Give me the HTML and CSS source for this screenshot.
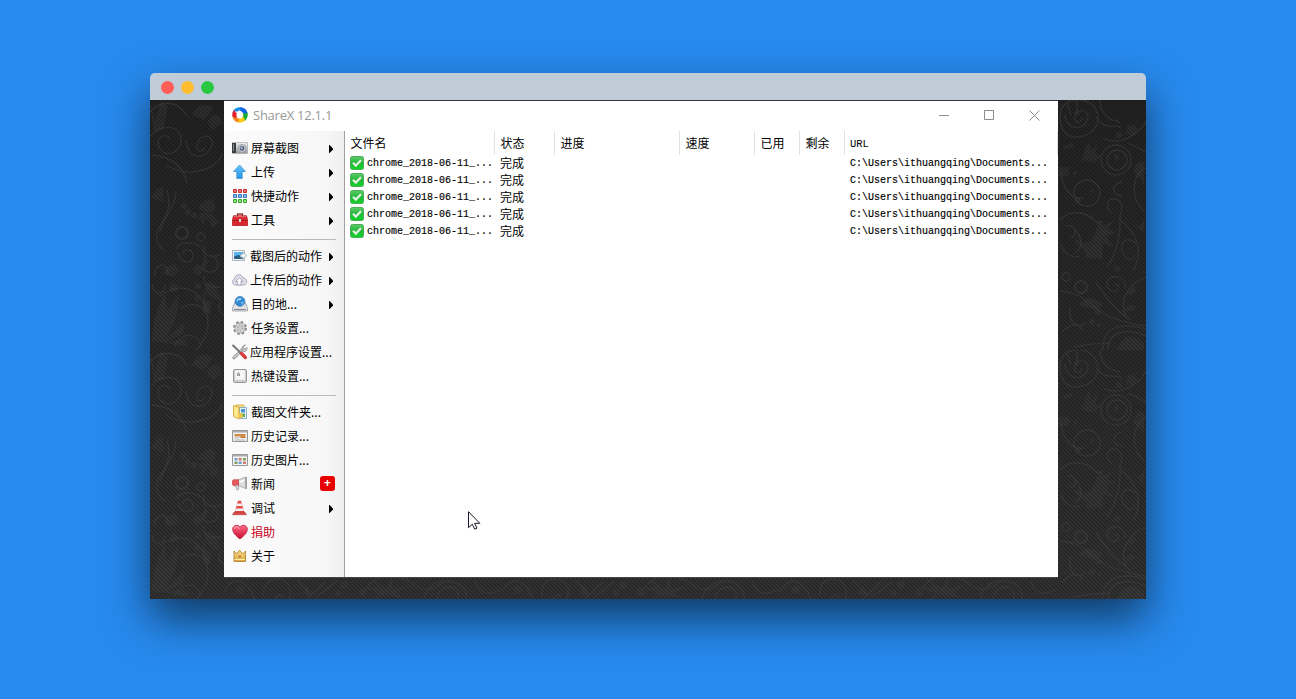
FILE: index.html
```html
<!DOCTYPE html>
<html lang="zh-CN">
<head>
<meta charset="utf-8">
<title>ShareX 12.1.1</title>
<link rel="stylesheet" href="styles.css">
</head>
<body>
<svg class="defs" width="0" height="0" aria-hidden="true">
  <defs>
    <linearGradient id="metal" x2="0" y2="1"><stop stop-color="#f2f2f4"/><stop offset="1" stop-color="#92959b"/></linearGradient>
    <linearGradient id="green" x2="0" y2="1"><stop stop-color="#5fca6c"/><stop offset=".5" stop-color="#1fb934"/><stop offset="1" stop-color="#12d428"/></linearGradient>
    <linearGradient id="blue" x2="0" y2="1"><stop stop-color="#6cc4ff"/><stop offset="1" stop-color="#1e95e6"/></linearGradient>
    <linearGradient id="gold" x2="0" y2="1"><stop stop-color="#ffe48a"/><stop offset="1" stop-color="#dca03a"/></linearGradient>
    <linearGradient id="rose" x2="0" y2="1"><stop stop-color="#ff6b86"/><stop offset="1" stop-color="#c8082e"/></linearGradient>
    <symbol id="arrow" viewBox="0 0 4 8"><path d="M0 0h.6L4 3.4v1.2L.6 8H0z" fill="#000"/></symbol>
    <symbol id="check" viewBox="0 0 14 14"><rect x=".5" y=".5" width="13" height="13" rx="2" fill="url(#green)" stroke="#4aac58"/><path d="M3 6.8l2.8 2.8L11 4.2" fill="none" stroke="#e6efe4" stroke-width="2.2"/></symbol>
  </defs>
</svg>
<main class="frame">
  <div class="mac-bar"><i class="dot red"></i><i class="dot yellow"></i><i class="dot green"></i></div>
  <div class="desktop">
    <svg class="wallpaper" width="996" height="499" aria-hidden="true">
      <defs>
        <pattern id="twill" width="4" height="4" patternUnits="userSpaceOnUse"><path d="M-1-1l6 6M3-1l2 2M-1 3l2 2" stroke="#000" stroke-opacity=".3" stroke-width="1"/></pattern>
        <linearGradient id="base" x2="0" y2="1"><stop stop-color="#222"/><stop offset="1" stop-color="#303030"/></linearGradient>
        <pattern id="floral-right" x="908" width="88" height="250" patternUnits="userSpaceOnUse">
          <g class="vine">
            <path d="M3 10C8-4 31-4 38 10S34 36 19 37 0 22 3 10M7 14C7 29 24 32 29 21S19 7 17 16s7 7 7 2M9 4c3 8 4 10 4 11M19 1v10M42 0C42 14 50 20 62 22M38 17C48 33 59 22 63 28M45 38C64 48 84 30 88 21M70 43l18 9"/>
            <circle cx="58" cy="60" r="15"/><circle cx="59" cy="60" r="10"/><circle cx="29" cy="93" r="13"/><path d="M3 73c2 18 12 27 23 25M64 82c-12 2-10 14 0 14M88 67C73 76 72 98 86 111"/>
            <path d="M2 120C15 107 30 114 34 119M5 117c11-8 26-3 31 3s7 0 8 2M54 114c-7-6-5-16 3-15s8 11 5 16c1 20-4 39-13 52M62 120c18 13 23 31 14 50M78 143c-11-8-17 1-13 10s13 7 11 2M8 126c11-3 12 12 4 11M15 127c9 9 11 21 2 26M3 144c2 9 11 15 19 12"/>
            <circle cx="8" cy="177" r="4"/><circle cx="23" cy="187" r="6" stroke-width="2"/><path d="M67 188c2-8-10-16-17-8-4 7 4 14 9 10s-1-7-3-5M88 177c-21 8-28 28-18 42M2 191c25 3 26 11 43 22 9 6 23 10 43 13M38 183c9 12 16 25 34 37M12 207c-2 17 9 24 15 15M16 247c31-6 22-2 35-4M45 250c-1-26 22-27 43-21M50 250c0-20 20-22 38-14M4 232c10-10 18-9 20-2"/>
          </g>
          <g class="leaf">
            <path d="M16 13l3-4 3 5-2 2zM24 60l4-13 3-6 2 9 7-5-3 9 6 2-7 7zM5 47l9-4 2 3-8 3zM0 67h11v9H0zM57 60c-2-5 1-8 3-5s0 7-3 6M70 24l4 2 3-3 1 5 3 2-4 2-1 4-4-2-5 1 2-4zM76 73c1-11 6-13 10-10v22c-3-10-5-6-10-12M43 120c-7 7-4 21-16 23-6 0-8-6-10-3 0 8 14 8 10 18 8-2 7 5 12-1l5 2 1-15 11 3-8-10 10-5-9-3 7-8-12 5zM76 124l5 3 6-8-2 14zM20 205c10-12 20-4 25-1l-7 6zM70 194c2-7 7-8 8-6s-4 8-7 7M67 210c3-7 9-6 10-3s-5 5-8 4M59 250c5-14 14-19 27-7v7z"/>
            <circle cx="34" cy="91" r="2"/><circle cx="20" cy="100" r="3"/><circle cx="17" cy="73" r="2"/><circle cx="40" cy="212" r="3"/><circle cx="61" cy="35" r="3"/><circle cx="59" cy="169" r="3"/><circle cx="34" cy="222" r="3"/><circle cx="41" cy="225" r="2"/>
          </g>
        </pattern>
        <pattern id="floral-left" width="74" height="250" patternUnits="userSpaceOnUse">
          <g class="vine">
            <path d="M0 12c13-14 30-10 37 4M1 36c9-12 29-12 30 3s-18 20-22 8 8-14 11-8M36 41c2 17 16 20 24 8s-8-18-12-7 5 11 7 5M2 55c24 2 32 15 35 28M16 65C40 80 70 68 72 53M17 90c5 18-1 26-7 36s-4 19 5 25M26 91c-1 19-10 19-16 41"/>
            <circle cx="32" cy="133" r="6" stroke-width="2"/><circle cx="51" cy="137" r="4"/><path d="M27 149c1-9 21-8 26 1s13 7 18 4M28 152c1 12 16 13 15 3-1-7-10-7-10-1M54 145c0 8 3 19 0 25M60 155c8 0 12 17 0 17s-8-13-2-10M15 185c0 13-16 8-12-1M5 176c-3-11 14-17 13-1M9 197c18-16 40-9 46 10s3 29-9 43M31 208c10-6 20-4 25 4M25 246c5-14 22-15 26 0M55 192c-2 5-3 14 5 20M72 201c-5 5-4 10 2 14M54 176c-1 11 6 12 17 11"/>
          </g>
          <g class="leaf">
            <path d="M0 2l5 20 6-21 7 6-5 23-9 2zM42 15c6-13 17-11 21-7l-9 12zM57 23c3-9 13-12 15 0l-9 7zM1 98c9-15 15-14 12 4zM48 109c6-12 16-13 17-4s-6 8-17 4M49 119c-1-10 13-7 16-2l-10 3M63 128c-9-11 0-17 6-6zM15 168l10-5 4 8-6 6-9-3zM55 188c0-8 8-9 13 3l4 10c-8-3-13-2-17-13M53 205l2-6 6 3-1 12-7-1zM2 241c0-19 8-38 13-48l2 18 12-16-3 23-10 20 19-16-2 11-17 9 18-3 4 7z"/>
            <circle cx="34" cy="106" r="3"/><circle cx="38" cy="112" r="3"/><circle cx="44" cy="115" r="3"/><circle cx="53" cy="122" r="2"/><circle cx="48" cy="170" r="5"/><circle cx="48" cy="186" r="3"/><circle cx="47" cy="198" r="3"/><circle cx="24" cy="188" r="4"/>
          </g>
        </pattern>
        <pattern id="floral-bottom" x="74" y="477" width="278" height="250" patternUnits="userSpaceOnUse">
          <g class="vine"><path d="M0 15c11-20 24-10 31 7M40 20c-4-24 29-23 26-3s-19 7-14 3 7-2 6 1M73 3l15 15M101 5L83 22M113 4c-12 9-15 13-22 16M142 12c13-20 37-13 49-4s21 3 30-4M200 22c7-29 46-19 42 0M213 22c2-17 25-15 21 0M250 4c8 18 17 12 28 8"/></g>
          <g class="leaf"><circle cx="16" cy="13" r="4"/><circle cx="121" cy="8" r="4"/><circle cx="114" cy="16" r="3"/><circle cx="139" cy="15" r="4"/><path d="M155 16l-15-5 14-1-9-9 17 10 6-12 1 13 17-4-14 8 10 5-22-3-11 5zM78 17l5-9 3 11z"/></g>
        </pattern>
      </defs>
      <rect width="996" height="499" fill="url(#base)"/>
      <rect width="74" height="499" fill="url(#floral-left)"/>
      <rect x="908" width="88" height="499" fill="url(#floral-right)"/>
      <rect x="74" y="477" width="834" height="22" fill="url(#floral-bottom)"/>
      <rect width="996" height="499" fill="url(#twill)"/>
    </svg>
    <section class="window">
      <header class="titlebar">
        <svg class="logo" width="16" height="16" viewBox="0 0 16 16"><path d="M8 .2C4 .2 1 2.500.6 6c1.500-1.700 3.400-2 5-1.200C6.400 3.500 8 3 10 4.300 10.500 2.500 9.800 1 8 .2z" fill="#168fe8"/><path d="M8 .2c4 0 7 2.300 7.500 6-1.500 1.300-3 1.600-4.200 1C11 5.500 10.300 4.500 8.500 4z" fill="#1463e4"/><path d="M15.600 5.500c.8 4-1 7-3.600 8.800-.4-2-.2-3-1.500-4C11.500 9 11.600 7.800 11 6c2 .7 3.600.6 4.600-.5z" fill="#15ae2c"/><path d="M12.800 13.800C10.500 15.800 7 16.300 4 14.700c2-.7 2.600-1.700 3-3.200 2 .3 3.200-.2 4-1.800 1.300 1.200 1.900 2.600 1.800 4.100z" fill="#ffc913"/><path d="M5 15.200C1.800 13.800.3 11 .3 8c1.300 1.600 2.500 2.300 4.200 2 .7 1 1.500 1.600 2.900 1.800-.2 1.500-1 2.700-2.400 3.400z" fill="#f4851b"/><path d="M.4 9C-.1 6 .8 4.300 2.700 2.700 2.500 4.400 3 5.200 4.800 6c-.6 1.600-.6 3 .4 4.600C3 11 1.300 10.500.4 9z" fill="#e61f2d"/></svg>
        <h1 class="title">ShareX 12.1.1</h1>
        <div class="controls">
          <svg width="10" height="10"><path d="M0 5.500h10" stroke="#999"/></svg>
          <svg width="10" height="10"><path d="M.5.5h9v9h-9z" fill="none" stroke="#8c8c8c"/></svg>
          <svg width="11" height="11"><path d="M.5.5l10 10M10.500.5l-10 10" stroke="#8c8c8c"/></svg>
        </div>
      </header>
      <div class="body">
        <nav class="menu">
          <a class="item"><svg class="icon" viewBox="0 0 16 16"><path d="M.5 2.500h15v11H.5z" fill="url(#metal)" stroke="#aaa" stroke-width=".7"/><path d="M0 3h4v10H0z" fill="#3c3e42"/><path d="M1 4h1v7H1z" fill="#888"/><circle cx="10" cy="8.400" r="4" fill="#c5cad2" stroke="#888" stroke-width=".6"/><circle cx="10" cy="8.400" r="2.400" fill="#5a6280"/><circle cx="9.600" cy="8" r="1" fill="#c5d4ee"/></svg><span>屏幕截图</span><svg class="arrow"><use href="#arrow"/></svg></a>
          <a class="item"><svg class="icon" viewBox="0 0 16 16"><path d="M7.500 1l6 6.500h-3.300V14.500H4.800V7.500H1.500z" fill="url(#blue)" stroke="#4a9bd4" stroke-width=".9"/></svg><span>上传</span><svg class="arrow"><use href="#arrow"/></svg></a>
          <a class="item"><svg class="icon" viewBox="0 0 16 16"><g stroke-width="1"><path d="M1.500 1.500h3v3h-3zM6.500 1.500h3v3h-3zM11.500 1.500h3v3h-3z" fill="#f27070" stroke="#c43030"/><path d="M1.500 6.500h3v3h-3zM6.500 6.500h3v3h-3zM11.500 6.500h3v3h-3z" fill="#8dbcf5" stroke="#3a74b8"/><path d="M1.500 11.500h3v3h-3zM6.500 11.500h3v3h-3zM11.500 11.500h3v3h-3z" fill="#8de47a" stroke="#35a52d"/></g></svg><span>快捷动作</span><svg class="arrow"><use href="#arrow"/></svg></a>
          <a class="item"><svg class="icon" viewBox="0 0 16 16"><path d="M5.500 4V2h5v2" fill="none" stroke="#9d3535" stroke-width="1.300"/><path d="M1.500 3.800h13l1 4v5.700H.5V7.800z" fill="#d9272d" stroke="#b01a20" stroke-width=".8"/><path d="M1 8.500h14" stroke="#9e2024"/><path d="M2 4.700h12" stroke="#f07878"/><path d="M7 7h2v3H7z" fill="#ddd"/></svg><span>工具</span><svg class="arrow"><use href="#arrow"/></svg></a>
          <hr class="rule">
          <a class="item tight"><svg class="icon" viewBox="0 0 16 16"><path d="M.5 2.500h12v10H.5z" fill="#f3f6fa" stroke="#a9b5bf"/><path d="M2 4h9v7H2z" fill="#5cb5ef"/><path d="M2 8.500l4-1.500 5 1v3H2z" fill="#2d6085"/><path d="M8.500 6.200h2.300V3.800l3.900 3.900-3.900 3.800V9.300H8.500z" fill="#f3f6f8" stroke="#8c9ca8" stroke-width=".7"/></svg><span>截图后的动作</span><svg class="arrow"><use href="#arrow"/></svg></a>
          <a class="item tight"><svg class="icon" viewBox="0 0 16 16"><path d="M3.700 13C-.7 12.600-.3 7.800 2.400 7.500 2.500 1.800 10 1 11 6c4.500-.2 5 6.500.7 7z" fill="#dedeea" stroke="#a3a3b8" stroke-width=".9"/><path d="M7.300 5.500l3.700 4H9V13H5.600V9.500h-2z" fill="#fff" stroke="#9999b0" stroke-width=".8"/></svg><span>上传后的动作</span><svg class="arrow"><use href="#arrow"/></svg></a>
          <a class="item"><svg class="icon" viewBox="0 0 16 16"><path d="M3 6h10l2.500 6v3H.5v-3z" fill="#dfe1e4" stroke="#999fa6" stroke-width=".8"/><path d="M2 13.500h12" stroke="#83878d"/><circle cx="8" cy="5.400" r="4.900" fill="#2f86d0" stroke="#3975b0" stroke-width=".7"/><path d="M4.500 4.500c1.200-3 4-3 5.500-2L8 4.500 6 4l-.5 2.500z" fill="#a1d8ff"/><path d="M9 6l3-1-1 4-2-1z" fill="#67b5ee"/></svg><span>目的地...</span><svg class="arrow"><use href="#arrow"/></svg></a>
          <a class="item"><svg class="icon" viewBox="0 0 16 16"><circle cx="8" cy="8" r="6" fill="none" stroke="#8d8d8d" stroke-width="2" stroke-dasharray="2.700 2.010"/><circle cx="8" cy="8" r="5" fill="#dcdcdc" stroke="#999" stroke-width=".9"/><circle cx="8" cy="8" r="2.800" fill="none" stroke="#a2a2a2" stroke-width="1.300" stroke-dasharray="1.700 1.230"/><circle cx="8" cy="8" r="1.200" fill="#fff" stroke="#888" stroke-width=".6"/></svg><span>任务设置...</span></a>
          <a class="item tight"><svg class="icon" viewBox="0 0 16 16" stroke-linecap="round"><path d="M2 13.800L11 5" stroke="#858585" stroke-width="3"/><path d="M2 13.800L11 5" stroke="#d5d5d5" stroke-width="1.500"/><path d="M13.200 1l-2 2.700 1 1.300 3-1.500c.3 3.800-2.600 4.800-4.800 3.700-1.300-2.700-.3-6 2.800-6.200" fill="#c4c4c4" stroke="#858585" stroke-width=".6"/><path d="M1.200 1.500l7.500 7.500" stroke="#777" stroke-width="2"/><path d="M9.500 9.500l3.900 4" stroke="#d83a3e" stroke-width="3.400"/></svg><span>应用程序设置...</span></a>
          <a class="item"><svg class="icon" viewBox="0 0 16 16"><rect x="1.500" y="1.500" width="13" height="13" rx="1" fill="#ccc" stroke="#999"/><path d="M3.500 2.500h9v9h-9z" fill="#f7f7f7" stroke="#eee"/><path d="M5.500 8V6l1-1.500L7.500 6v2M5.500 7h2" fill="none" stroke="#777" stroke-width=".8"/></svg><span>热键设置...</span></a>
          <hr class="rule">
          <a class="item"><svg class="icon" viewBox="0 0 16 16"><path d="M4 1h8v12H4z" fill="#f9dd83" stroke="#d0a642" stroke-width=".8"/><path d="M7.500 3.500h7v11h-7z" fill="#e8f2fc" stroke="#7fa5c9" stroke-width=".9"/><path d="M9 5h4v3.500H9z" fill="#4b94d6"/><path d="M9 9.500h4V13H9z" fill="#69ad57"/><path d="M1.500 1.500l5.500 2v11.500l-5.500-2.500z" fill="#ffe88e" stroke="#d2a72f" stroke-width=".9"/><path d="M7 9h3.500v5H7z" fill="#edc64c"/></svg><span>截图文件夹...</span></a>
          <a class="item"><svg class="icon" viewBox="0 0 16 16"><path d="M.5 2.500h15v11H.5z" fill="#f2f2f2" stroke="#969696"/><path d="M1 3h14v1.500H1z" fill="#acacac"/><path d="M2.500 6h11v2.500h-11z" fill="#cd8b42"/><path d="M8.500 8.500h5V10h-5z" fill="#b46f2c"/><path d="M2.500 10h5M2.500 12h11" stroke="#a8a8a8" stroke-width=".8"/></svg><span>历史记录...</span></a>
          <a class="item"><svg class="icon" viewBox="0 0 16 16"><path d="M.5 2.500h15v11H.5z" fill="#f5f5f5" stroke="#969696"/><path d="M1 3h14v1.500H1z" fill="#acacac"/><path d="M2.500 6h3v2.500h-3zM6.700 9.500h3V12h-3z" fill="#6e9fd0"/><path d="M6.700 6h3v2.500h-3zM11 9.500h3V12h-3z" fill="#d07a6a"/><path d="M11 6h3v2.500h-3zM2.500 9.500h3V12h-3z" fill="#829e67"/></svg><span>历史图片...</span></a>
          <a class="item"><svg class="icon" viewBox="0 0 16 16"><path d="M6 4L13.500 1v11.500L6 9.500z" fill="#ddd" stroke="#999" stroke-width=".7"/><path d="M1.500 3.700H6.500v6h-5L.3 8.500V5z" fill="#e8575b" stroke="#c5464b" stroke-width=".7"/><path d="M3.500 9.500h3v4.300H4.700z" fill="#ddd" stroke="#999" stroke-width=".7"/><path d="M14.200 1v12" stroke="#a2a2a2" stroke-width="1.600"/><path d="M7.500 5.200l4.500-1.700v2L7.500 7z" fill="#fff"/></svg><span>新闻</span><b class="badge">+</b></a>
          <a class="item"><svg class="icon" viewBox="0 0 16 16"><path d="M6 .8h3L12.500 13h-10z" fill="#e34e4b"/><path d="M5.300 3.500h4.400l.7 2.500H4.600zM3.900 8.500h7.300l.7 2.500H3.200z" fill="#efefef"/><path d="M2.200 12h10.600l1.700 2.700H.5z" fill="#db4a46" stroke="#ad403e" stroke-width=".6"/></svg><span>调试</span><svg class="arrow"><use href="#arrow"/></svg></a>
          <a class="item donate"><svg class="icon" viewBox="0 0 16 16"><path d="M8 15C3 11 .6 8.500.7 5 .8 1.200 5.800-.2 8 3.200 10.200-.2 15.200 1.200 15.300 5 15.400 8.500 13 11 8 15z" fill="url(#rose)" stroke="#bd1d40" stroke-width=".8"/><path d="M2.400 5c.3-3 3.800-3 5 0" fill="none" stroke="#ff9cac" stroke-width="1.200"/></svg><span>捐助</span></a>
          <a class="item"><svg class="icon" viewBox="0 0 16 16"><path d="M2 13.500V3l2.800 3L7.700 2 10.600 6 13.500 3v10.500z" fill="url(#gold)" stroke="#b08536" stroke-width=".9"/><path d="M2.500 11.500h10.500" stroke="#fff0a2"/><circle cx="7.700" cy="8.500" r="1.200" fill="#b08045"/></svg><span>关于</span></a>
        </nav>
        <table class="files">
          <colgroup><col class="c-name"><col class="c-state"><col class="c-progress"><col class="c-speed"><col class="c-used"><col class="c-left"><col class="c-url"></colgroup>
          <thead><tr><th>文件名</th><th>状态</th><th>进度</th><th>速度</th><th>已用</th><th>剩余</th><th class="mono">URL</th></tr></thead>
          <tbody>
            <tr><td class="mono name"><svg class="check"><use href="#check"/></svg>chrome_2018-06-11_...</td><td>完成</td><td></td><td></td><td></td><td></td><td class="mono">C:\Users\ithuangqing\Documents...</td></tr>
            <tr><td class="mono name"><svg class="check"><use href="#check"/></svg>chrome_2018-06-11_...</td><td>完成</td><td></td><td></td><td></td><td></td><td class="mono">C:\Users\ithuangqing\Documents...</td></tr>
            <tr><td class="mono name"><svg class="check"><use href="#check"/></svg>chrome_2018-06-11_...</td><td>完成</td><td></td><td></td><td></td><td></td><td class="mono">C:\Users\ithuangqing\Documents...</td></tr>
            <tr><td class="mono name"><svg class="check"><use href="#check"/></svg>chrome_2018-06-11_...</td><td>完成</td><td></td><td></td><td></td><td></td><td class="mono">C:\Users\ithuangqing\Documents...</td></tr>
            <tr><td class="mono name"><svg class="check"><use href="#check"/></svg>chrome_2018-06-11_...</td><td>完成</td><td></td><td></td><td></td><td></td><td class="mono">C:\Users\ithuangqing\Documents...</td></tr>
          </tbody>
        </table>
      </div>
    </section>
  </div>
</main>
<svg class="cursor" width="13" height="20" viewBox="0 0 13 20"><path d="M.5.7v16l3.800-3.500 2.400 5 2.300-1.100-2.400-4.800h5.200z" fill="#fff" stroke="#17172a"/></svg>
</body>
</html>
```
FILE: styles.css
```css
* { box-sizing: border-box; }
body {
  margin: 0;
  height: 699px;
  overflow: hidden;
  padding: 73px 150px 0;
  background: #278aee;
  font: 12px/24px "Noto Sans CJK SC", sans-serif;
  color: #000;
}
.defs { position: absolute; }
.frame {
  width: 996px;
  height: 526px;
  border-radius: 5px 5px 0 0;
  box-shadow: 0 20px 44px rgba(0, 0, 0, .58);
}
.mac-bar {
  display: flex;
  align-items: center;
  gap: 7px;
  height: 27px;
  padding: 1px 10.5px 0;
  border-radius: 5px 5px 0 0;
  background: #c0cdd8;
}
.dot { width: 13px; height: 13px; border-radius: 50%; }
.red { background: #ff5f57; }
.yellow { background: #ffbd2e; }
.green { background: #28c940; }
.desktop {
  position: relative;
  height: 499px;
  padding: 0 88px 0 74px;
}
.wallpaper { position: absolute; left: 0; top: 0; }
.vine { fill: none; stroke: #484848; stroke-opacity: .45; stroke-width: 1.3; }
.leaf { fill: #444; fill-opacity: .3; }
.window {
  position: relative;
  height: 478px;
  border-top: 1px solid #35383c;
  border-bottom: 1px solid #444;
  background: #fff;
}
.titlebar { display: flex; align-items: center; height: 30px; padding: 0 18px 2px 8px; }
.title {
  margin: 0 0 0 5px;
  color: #999;
  font: 400 13px/18px "Open Sans", sans-serif;
  letter-spacing: -.25px;
}
.controls { display: flex; align-items: center; gap: 35px; margin-left: auto; }
.controls svg { display: block; }
.body { display: flex; height: 446px; }
.menu {
  width: 121px;
  flex: none;
  padding: 5px 8px 0;
  border-right: 1px solid #a0a0a0;
  background: linear-gradient(90deg, #fbfbfb, #f7f7f7 85%, #efefef);
}
.item { display: flex; align-items: center; height: 24px; white-space: nowrap; }
.item span { margin-left: 3px; }
.tight span { margin-left: 2px; }
.icon { width: 16px; height: 16px; flex: none; }
.arrow { width: 4px; height: 8px; margin: 1px 3px 0 auto; flex: none; }
.rule { height: 12px; margin: 0; border: 0; background: linear-gradient(#b9b9b9, #b9b9b9) 0 7px / 104px 1px no-repeat; }
.badge {
  width: 15px;
  height: 15px;
  margin: -1px 1px 0 auto;
  border-radius: 3px;
  background: #e80000;
  color: #fff;
  font: 700 12px/14px "Open Sans", sans-serif;
  text-align: center;
}
.donate { color: #c80018; }
.files { width: 713px; height: 109px; table-layout: fixed; border-collapse: separate; border-spacing: 0; align-self: flex-start; }
.c-name { width: 150px; }
.c-state { width: 60px; }
.c-progress { width: 125px; }
.c-speed { width: 75px; }
.c-used { width: 45px; }
.c-left { width: 45px; }
.c-url { width: 213px; }
.files th {
  height: 24px;
  padding: 0 0 0 5.5px;
  border-right: 1px solid #e2e2e2;
  font-weight: 400;
  line-height: 24px;
  text-align: left;
}
.files td { height: 17px; padding: 0 0 0 5px; line-height: 15px; vertical-align: top; white-space: nowrap; }
.files .mono { font-family: "Liberation Mono", "Courier New", monospace; font-size: 10px; }
.files th.mono { padding: 2px 0 0 5px; font-size: 10.5px; line-height: 22px; }
.files td.mono { line-height: 17px; -webkit-text-stroke: .15px #000; }
.files .name svg { width: 14px; height: 14px; margin-right: 3px; vertical-align: middle; }
.cursor { position: absolute; left: 468px; top: 511px; }
```
